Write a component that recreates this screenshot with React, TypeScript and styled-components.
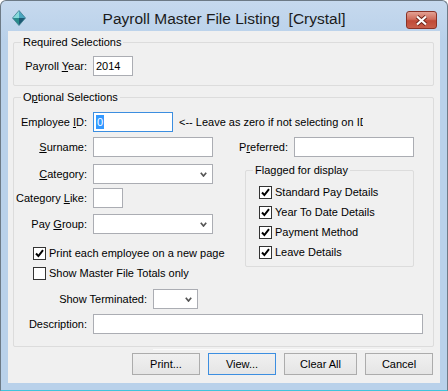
import React from 'react';
import styled, { createGlobalStyle } from 'styled-components';

const GlobalStyle = createGlobalStyle`
  html, body {
    margin: 0;
    padding: 0;
    background: #ffffff;
  }
  body {
    font-family: "Liberation Sans", Arial, sans-serif;
    font-size: 11px;
    color: #000;
  }
`;

const Window = styled.div`
  width: 448px;
  height: 391px;
  box-sizing: border-box;
  display: flex;
  flex-direction: column;
  padding: 0 7px 7px;
  background: linear-gradient(#c6d9ee, #b9d1ea 40px);
  border: 1px solid #6d7a86;
  border-bottom-color: #40c4dc;
  border-radius: 6px 6px 0 0;
`;

const TitleBar = styled.div`
  height: 30px;
  display: grid;
  grid-template-columns: 1fr auto 1fr;
  align-items: center;
`;

const AppIcon = styled.svg`
  width: 14px;
  height: 16px;
  margin: 3px 0 0 4px;
`;

const Title = styled.div`
  font-size: 15.5px;
  color: #1b1b1b;
  padding-top: 5px;
  white-space: pre;
`;

const CloseButton = styled.div`
  justify-self: end;
  width: 31px;
  height: 18px;
  box-sizing: border-box;
  margin: 8px 3px 0 0;
  border: 1px solid #8a3226;
  border-radius: 3px;
  background: linear-gradient(#e3a193 0%, #cf6d5c 45%, #c04a37 55%, #c85f4a 100%);
  display: flex;
  align-items: center;
  justify-content: center;
`;

const Client = styled.div`
  flex: 1;
  background: #f0f0f0;
  padding: 11px 6px 0 5px;
  display: flex;
  flex-direction: column;
`;

const Group = styled.div<{ $mt?: number; $ml?: number; $pt: number; $pb: number; $pl?: number; $w?: number }>`
  position: relative;
  border: 1px solid #dcdcdc;
  border-radius: 2px;
  margin: ${({ $mt }) => $mt ?? 0}px 0 0 ${({ $ml }) => $ml ?? 0}px;
  padding: ${({ $pt }) => $pt}px 0 ${({ $pb }) => $pb}px ${({ $pl }) => $pl ?? 0}px;
  width: ${({ $w }) => ($w ? $w + 'px' : 'auto')};
  box-sizing: border-box;
  display: flex;
  flex-direction: column;
`;

const Legend = styled.div`
  position: absolute;
  top: -7px;
  left: 7px;
  padding: 0 2px;
  background: #f0f0f0;
  line-height: 13px;
  white-space: nowrap;
`;

const Row = styled.div<{ $mt?: number }>`
  display: flex;
  align-items: center;
  gap: 6px;
  height: 20px;
  margin-top: ${({ $mt }) => $mt ?? 0}px;
`;

const Label = styled.div<{ $w: number }>`
  width: ${({ $w }) => $w}px;
  flex: none;
  text-align: right;
  white-space: nowrap;
`;

const Key = styled.u`
  text-decoration: underline;
  text-underline-offset: 1px;
`;

const Field = styled.div<{ $w: number; $focus?: boolean }>`
  width: ${({ $w }) => $w}px;
  height: 20px;
  flex: none;
  box-sizing: border-box;
  background: #fff;
  border: 1px solid ${({ $focus }) => ($focus ? '#3c8ee0' : '#abadb3')};
  padding-left: 2px;
  display: flex;
  align-items: center;
  line-height: 14px;
`;

const Selected = styled.span`
  background: #3399ff;
  color: #fff;
  padding: 0 1px;
`;

const Combo = styled(Field)`
  justify-content: flex-end;
  padding: 0 5px 0 0;
`;

const Hint = styled.div`
  width: 184px;
  overflow: hidden;
  white-space: nowrap;
`;

const Middle = styled.div`
  display: flex;
  margin-top: 5px;
`;

const LeftCol = styled.div`
  width: 216px;
  display: flex;
  flex-direction: column;
`;

const RightCol = styled.div`
  width: 185px;
  display: flex;
  flex-direction: column;
`;

const CheckRow = styled.div<{ $mt?: number; $pl?: number }>`
  display: flex;
  align-items: center;
  gap: 3px;
  height: 13px;
  line-height: 13px;
  margin-top: ${({ $mt }) => $mt ?? 0}px;
  padding-left: ${({ $pl }) => $pl ?? 0}px;
  white-space: nowrap;
`;

const Box = styled.div`
  width: 13px;
  height: 13px;
  box-sizing: border-box;
  border: 1px solid #333;
  background: #fff;
  flex: none;
  display: flex;
  align-items: center;
  justify-content: center;
`;

const Rule = styled.div`
  height: 1px;
  margin: 2px 13px 0 140px;
  background: #fbfbfb;
`;

const ButtonBar = styled.div`
  display: flex;
  justify-content: flex-end;
  gap: 8px;
  margin-top: 3px;
  padding-right: 1px;
`;

const Button = styled.div<{ $w?: number; $default?: boolean }>`
  width: ${({ $w }) => $w ?? 68}px;
  height: 22px;
  box-sizing: border-box;
  border: 1px solid ${({ $default }) => ($default ? '#3c8ee0' : '#acacac')};
  background: linear-gradient(#f0f0f0, #e5e5e5);
  display: flex;
  align-items: center;
  justify-content: center;
`;

function Chevron() {
  return (
    <svg width="7" height="5" viewBox="0 0 7 5">
      <path d="M0.8 0.8 L3.5 4 L6.2 0.8" fill="none" stroke="#555" strokeWidth="1.7" />
    </svg>
  );
}

function Check({ on }: { on: boolean }) {
  return (
    <Box>
      {on && (
        <svg width="9" height="9" viewBox="0 0 9 9">
          <path d="M1 4.5 L3.4 7 L8 1.2" fill="none" stroke="#000" strokeWidth="2" />
        </svg>
      )}
    </Box>
  );
}

export default function App() {
  return (
    <>
      <GlobalStyle />
      <Window>
        <TitleBar>
          <AppIcon viewBox="0 0 14 16">
            <polygon points="7,0.5 0.5,8 7,8" fill="#86d9d9" />
            <polygon points="7,0.5 13.5,8 7,8" fill="#4aa6bf" />
            <polygon points="0.5,8 7,15.5 7,8" fill="#2a8c8c" />
            <polygon points="13.5,8 7,15.5 7,8" fill="#1d5a74" />
            <polygon points="7,0.5 13.5,8 7,15.5 0.5,8" fill="none" stroke="#3f7f8f" strokeWidth="0.8" />
          </AppIcon>
          <Title>Payroll Master File Listing  [Crystal]</Title>
          <CloseButton>
            <svg width="13" height="11" viewBox="0 0 13 11">
              <path d="M2 1.5 L11 9.5 M11 1.5 L2 9.5" stroke="#6e2418" strokeWidth="4" />
              <path d="M2 1.5 L11 9.5 M11 1.5 L2 9.5" stroke="#fff" strokeWidth="2.2" />
            </svg>
          </CloseButton>
        </TitleBar>

        <Client>
          <Group $pt={13} $pb={9}>
            <Legend>Required Selections</Legend>
            <Row>
              <Label $w={73}>Payroll <Key>Y</Key>ear:</Label>
              <Field $w={40}>2014</Field>
            </Row>
          </Group>

          <Group $mt={11} $pt={14} $pb={12}>
            <Legend>O<Key>p</Key>tional Selections</Legend>
            <Row>
              <Label $w={73}>Employee <Key>I</Key>D:</Label>
              <Field $w={80} $focus>
                <Selected>0</Selected>
              </Field>
              <Hint>&lt;-- Leave as zero if not selecting on ID</Hint>
            </Row>

            <Middle>
              <LeftCol>
                <Row>
                  <Label $w={73}><Key>S</Key>urname:</Label>
                  <Field $w={120} />
                </Row>
                <Row $mt={7}>
                  <Label $w={73}><Key>C</Key>ategory:</Label>
                  <Combo $w={120}><Chevron /></Combo>
                </Row>
                <Row $mt={4}>
                  <Label $w={73}>Category <Key>L</Key>ike:</Label>
                  <Field $w={30} />
                </Row>
                <Row $mt={6}>
                  <Label $w={73}>Pay <Key>G</Key>roup:</Label>
                  <Combo $w={120}><Chevron /></Combo>
                </Row>
                <CheckRow $mt={13} $pl={19}>
                  <Check on />
                  Print each employee on a new page
                </CheckRow>
                <CheckRow $mt={7} $pl={19}>
                  <Check on={false} />
                  Show Master File Totals only
                </CheckRow>
              </LeftCol>

              <RightCol>
                <Row>
                  <Label $w={58}>P<Key>r</Key>eferred:</Label>
                  <Field $w={120} />
                </Row>
                <Group $mt={13} $ml={15} $pt={15} $pb={7} $pl={13} $w={169}>
                  <Legend>Flagged for display</Legend>
                  <CheckRow>
                    <Check on />
                    Standard Pay Details
                  </CheckRow>
                  <CheckRow $mt={7}>
                    <Check on />
                    Year To Date Details
                  </CheckRow>
                  <CheckRow $mt={7}>
                    <Check on />
                    Payment Method
                  </CheckRow>
                  <CheckRow $mt={7}>
                    <Check on />
                    Leave Details
                  </CheckRow>
                </Group>
              </RightCol>
            </Middle>

            <Row $mt={9}>
              <Label $w={133}>Show Terminated:</Label>
              <Combo $w={45}><Chevron /></Combo>
            </Row>
            <Row $mt={5}>
              <Label $w={73}>Description:</Label>
              <Field $w={330} />
            </Row>
          </Group>

          <Rule />
          <ButtonBar>
            <Button>Print...</Button>
            <Button $default>View...</Button>
            <Button $w={73}>Clear All</Button>
            <Button>Cancel</Button>
          </ButtonBar>
        </Client>
      </Window>
    </>
  );
}
